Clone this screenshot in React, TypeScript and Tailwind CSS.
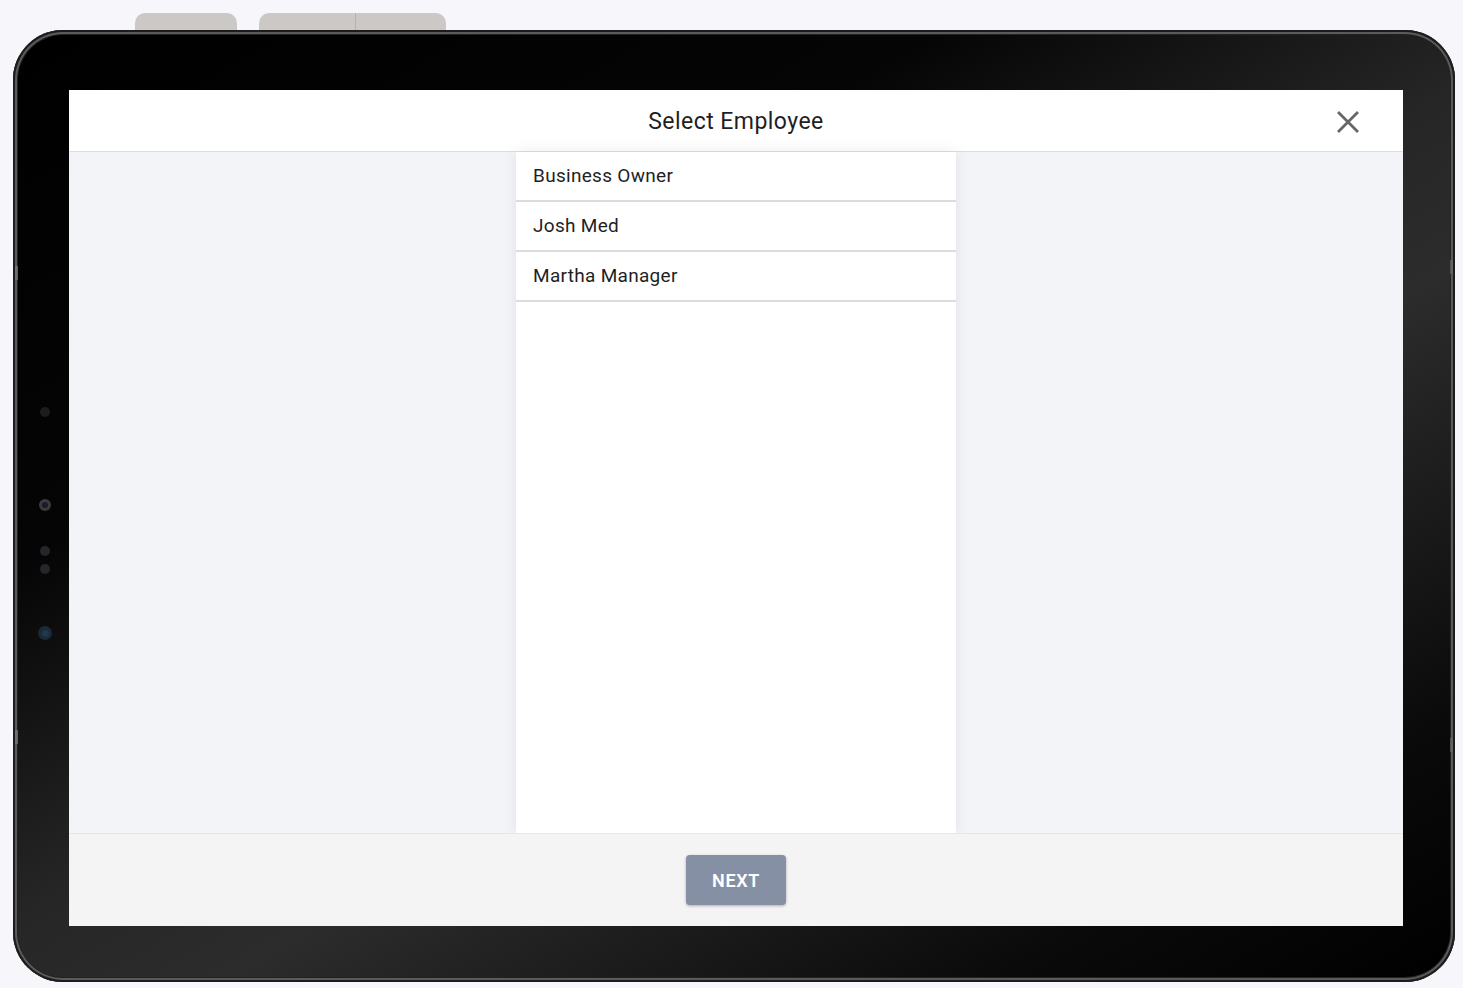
import React from "react";

const employees = ["Business Owner", "Josh Med", "Martha Manager"];

export default function App() {
  return (
    <div
      className="relative w-[1463px] h-[988px] bg-[#f7f7fb] overflow-hidden"
      style={{ fontFamily: "Roboto, 'Liberation Sans', sans-serif" }}
    >
      {/* hardware buttons on top edge, behind the frame */}
      <div className="absolute left-[135px] top-[13px] flex gap-[22px]">
        <div className="w-[102px] h-[30px] rounded-t-[10px] bg-[#cbc8c5]" />
        <div className="w-[187px] h-[30px] rounded-t-[10px] bg-[#cbc8c5] flex">
          <div className="w-[97px] h-full border-r border-[#b5b2ae]" />
        </div>
      </div>

      <div className="relative pl-[13px] pt-[30px]">
        {/* tablet frame */}
        <div
          className="relative w-[1442px] h-[952px] rounded-[50px] pl-[56px] pt-[60px] shadow-[inset_0_0_0_2px_#1c1c1c,inset_0_0_0_4px_#5a5a5a,inset_0_0_0_5px_#222]"
          style={{
            background:
              "linear-gradient(150deg, #000 0%, #050505 30%, #262626 50%, #2c2c2c 60%, #0a0a0a 85%, #000 100%)",
          }}
        >
          {/* side buttons */}
          <div className="absolute left-[2px] top-[236px] w-[3px] h-[14px] bg-[#777] opacity-70" />
          <div className="absolute left-[2px] top-[700px] w-[3px] h-[14px] bg-[#777] opacity-70" />
          <div className="absolute right-[2px] top-[230px] w-[3px] h-[14px] bg-[#666] opacity-70" />
          <div className="absolute right-[2px] top-[708px] w-[3px] h-[14px] bg-[#666] opacity-70" />

          {/* cameras / sensors */}
          <div className="absolute left-[25px] top-[377px] w-[14px] flex flex-col items-center">
            <div className="w-[10px] h-[10px] rounded-full bg-[#1d1b1f]" />
            <div className="mt-[82px] w-[12px] h-[12px] rounded-full bg-[#3b3a3f] flex items-center justify-center">
              <div className="w-[6px] h-[6px] rounded-full bg-[#1a1a2a]" />
            </div>
            <div className="mt-[35px] w-[10px] h-[10px] rounded-full bg-[#29242a]" />
            <div className="mt-[8px] w-[10px] h-[10px] rounded-full bg-[#29242a]" />
            <div className="mt-[52px] w-[14px] h-[14px] rounded-full bg-[#1b2a36] flex items-center justify-center">
              <div className="w-[7px] h-[7px] rounded-full bg-[#203a4c]" />
            </div>
          </div>

          {/* screen */}
          <div className="w-[1334px] h-[836px] flex flex-col bg-white">
            {/* header */}
            <div className="h-[62px] shrink-0 grid grid-cols-[1fr_auto_1fr] items-center bg-white border-b border-[#dedede] pt-[3px]">
              <div />
              <span className="text-[23px] text-[#1f1f1f] tracking-[0.45px]">Select Employee</span>
              <div className="flex justify-end pr-[44px]">
                <svg width="22" height="22" viewBox="0 0 22 22">
                  <path d="M2 2 L20 20 M20 2 L2 20" stroke="#666" strokeWidth="2.8" strokeLinecap="square" />
                </svg>
              </div>
            </div>

            {/* body */}
            <div className="flex-1 bg-[#f3f4f8] flex justify-center min-h-0">
              <div className="w-[440px] h-full bg-white shadow-[0_0_14px_rgba(0,0,0,0.08)] flex flex-col">
                {employees.map((e) => (
                  <div
                    key={e}
                    className="h-[50px] shrink-0 border-b-2 border-[#dcdcdc] flex items-center pl-[17px] text-[19px] text-[#1f1f1f] tracking-[0.3px]"
                  >
                    {e}
                  </div>
                ))}
              </div>
            </div>

            {/* footer */}
            <div className="h-[93px] shrink-0 bg-[#f4f4f4] border-t border-[#e6e6e6] flex items-center justify-center">
              <button className="w-[100px] h-[50px] rounded-[4px] bg-[#8590a5] text-white text-[18px] font-semibold tracking-[0.6px] shadow-[0_1px_3px_rgba(0,0,0,0.3)]">
                NEXT
              </button>
            </div>
          </div>
        </div>
      </div>
    </div>
  );
}
